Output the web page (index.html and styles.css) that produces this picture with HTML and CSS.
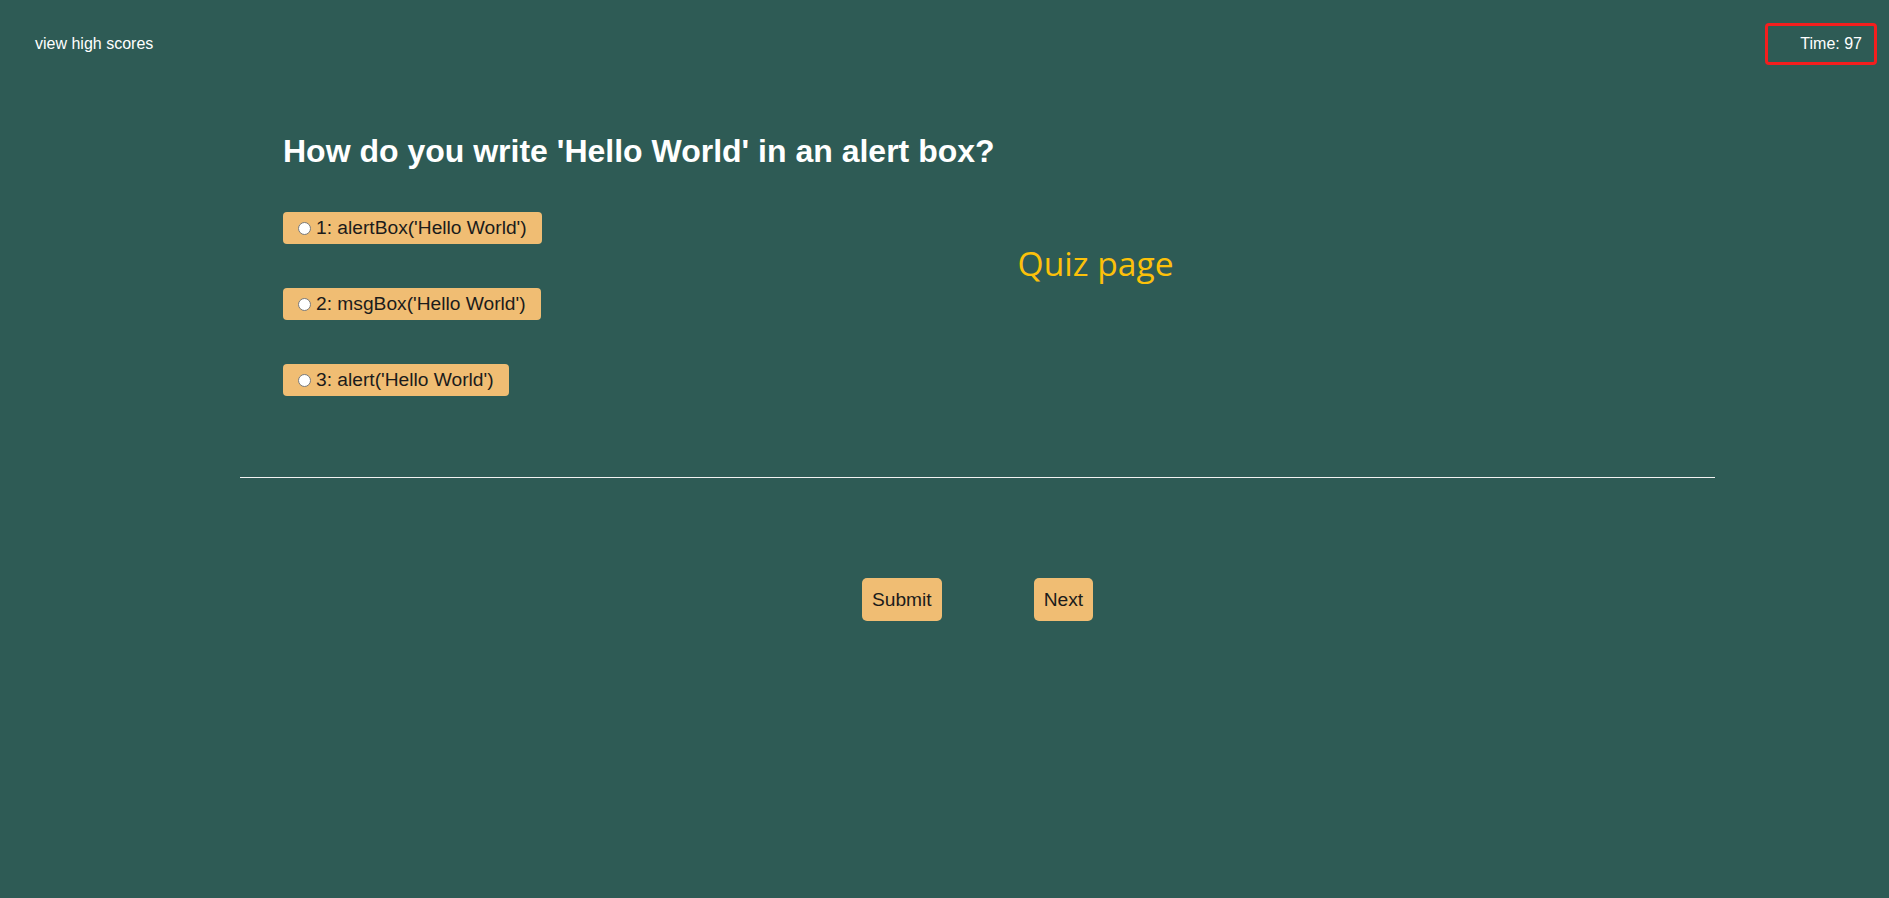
FILE: index.html
```html
<!DOCTYPE html>
<html lang="en">
<head>
<meta charset="utf-8">
<title>Quiz</title>
<link rel="stylesheet" href="styles.css">
</head>
<body>
<header class="topbar">
  <a class="scores-link" href="#">view high scores</a>
  <div class="timer">Time: 97</div>
</header>
<main class="main">
  <section class="quiz">
    <div class="question">
      <h1 class="question-title">How do you write 'Hello World' in an alert box?</h1>
      <div class="options">
        <label class="option"><input type="radio" name="answer" class="option-radio">1: alertBox('Hello World')</label>
        <label class="option"><input type="radio" name="answer" class="option-radio">2: msgBox('Hello World')</label>
        <label class="option"><input type="radio" name="answer" class="option-radio">3: alert('Hello World')</label>
      </div>
    </div>
    <div class="page-label">Quiz page</div>
  </section>
  <hr class="divider">
  <div class="actions">
    <button class="btn" type="button">Submit</button>
    <button class="btn" type="button">Next</button>
  </div>
</main>
</body>
</html>
```

FILE: styles.css
```css
html, body {
  margin: 0;
  padding: 0;
}
body {
  background: #2e5b55;
  font-family: "Liberation Sans", Arial, sans-serif;
  color: #fff;
  width: 1889px;
  height: 898px;
  overflow: hidden;
}
.topbar {
  display: flex;
  justify-content: space-between;
  align-items: center;
  padding: 23px 12px 0 35px;
}
.scores-link {
  color: #fff;
  text-decoration: none;
  font-size: 16px;
}
.timer {
  font-size: 16px;
  line-height: 18px;
  border: 3px solid #f41e1e;
  border-radius: 4px;
  padding: 9px 12px 9px 32px;
}
.main {
  margin: 0 174px 0 240px;
}
.quiz {
  display: flex;
  align-items: flex-start;
  padding: 68px 0 0 43px;
}
.question-title {
  margin: 0;
  font-size: 32px;
  font-weight: bold;
}
.options {
  display: flex;
  flex-direction: column;
  align-items: flex-start;
  gap: 44px;
  margin-top: 42px;
}
.option {
  display: inline-flex;
  align-items: center;
  height: 32px;
  padding: 0 15px 0 15px;
  background: #f0bd73;
  color: #1b1b1b;
  border-radius: 4px;
  font-size: 19.2px;
}
.option-radio {
  appearance: none;
  -webkit-appearance: none;
  box-sizing: border-box;
  margin: 0 5px 0 0;
  width: 13px;
  height: 13px;
  border: 1px solid #7a7a7a;
  border-radius: 50%;
  background: #fff;
}
.page-label {
  margin: 107px 0 0 23px;
  font-family: "Open Sans", "Noto Sans", sans-serif;
  font-size: 33.6px;
  color: #fcc10a;
}
.divider {
  border: 0;
  border-top: 1px solid #f2f2f2;
  margin: 81px 0 0 0;
  height: 0;
}
.actions {
  display: flex;
  justify-content: center;
  gap: 92px;
  margin-top: 100px;
}
.btn {
  font-family: "Liberation Sans", Arial, sans-serif;
  font-size: 19.2px;
  line-height: 23px;
  padding: 10px;
  border: 0;
  border-radius: 5px;
  background: #f0bd73;
  color: #1b1b1b;
}
```
